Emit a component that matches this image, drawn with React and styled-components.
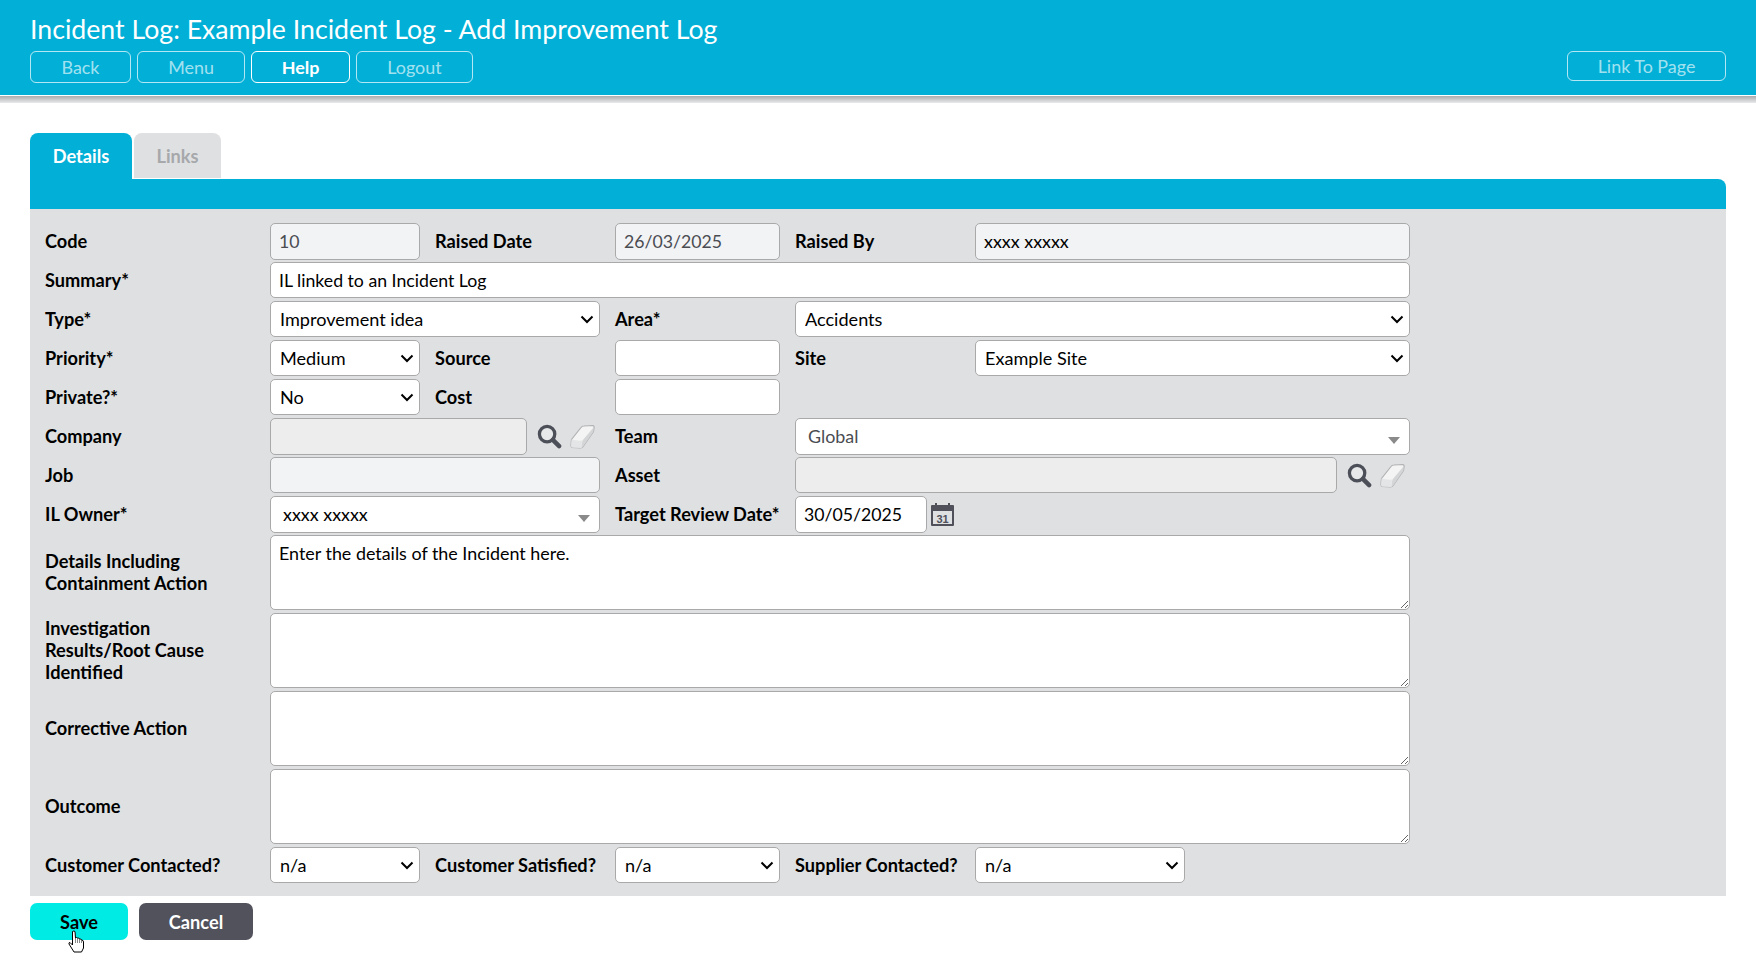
import React from 'react'
import styled, { createGlobalStyle } from 'styled-components'

const chevron = "url(\"data:image/svg+xml,%3Csvg xmlns='http://www.w3.org/2000/svg' width='14' height='9' viewBox='0 0 14 9'%3E%3Cpath d='M1.5 1.5L7 7l5.5-5.5' fill='none' stroke='%23000' stroke-width='2'/%3E%3C/svg%3E\")"

const GlobalStyle = createGlobalStyle`
  html, body { margin: 0; padding: 0; background: #fff; }
  body { font-family: Lato, "Liberation Sans", sans-serif; color: #000; }
  * { box-sizing: border-box; }
`

const Header = styled.header`
  height: 96px;
  background: #02b0d7;
  border-bottom: 1px solid #fff;
  padding: 13px 30px 0;
`
const HeaderShadow = styled.div`
  height: 7px;
  background: linear-gradient(#a9abad, #e9eaeb);
`
const Title = styled.h1`
  margin: 0;
  height: 38px;
  font-size: 26.7px;
  line-height: 33px;
  font-weight: 400;
  color: #fff;
`
const NavRow = styled.nav`
  display: flex;
  align-items: flex-start;
  gap: 6px;
`
const NavButton = styled.button`
  height: ${p => p.$short ? '30px' : '32px'};
  width: ${p => p.$width}px;
  margin-left: ${p => p.$push ? 'auto' : '0'};
  padding: 0;
  font: ${p => p.$active ? 700 : 400} 17.9px Lato, sans-serif;
  color: ${p => p.$active ? '#fff' : 'rgba(255,255,255,.65)'};
  background: transparent;
  border: 1px solid ${p => p.$active ? '#fff' : 'rgba(255,255,255,.7)'};
  border-radius: 6px;
`

const Main = styled.main`
  padding: 30px 30px 24px;
`
const Tabs = styled.div`
  display: flex;
  align-items: flex-start;
  gap: 2px;
  height: 46px;
`
const Tab = styled.div`
  height: ${p => p.$active ? '46px' : '45px'};
  width: ${p => p.$width}px;
  border-radius: 8px 8px 0 0;
  background: ${p => p.$active ? '#02b0d7' : '#dfe0e2'};
  color: ${p => p.$active ? '#fff' : '#a6a8ab'};
  font-size: 18.2px;
  font-weight: 700;
  line-height: 46px;
  text-align: center;
`
const TabBar = styled.div`
  height: 30px;
  background: #02b0d7;
  border-top-right-radius: 8px;
`
const Panel = styled.form`
  display: flex;
  flex-direction: column;
  gap: 3px;
  height: 687px;
  padding: 14px 15px 0;
  background: #dfe0e2;
`
const Row = styled.div`
  display: grid;
  grid-template-columns: 210px 150px 165px 165px 165px 435px;
  column-gap: 15px;
  align-items: center;
  height: ${p => p.$tall ? '75px' : '36px'};
`
const Label = styled.label`
  font-size: 18.2px;
  font-weight: 700;
  line-height: 22px;
  margin-bottom: 1px;
`
const Cell = styled.div`
  grid-column: span ${p => p.$span || 1};
  display: flex;
  align-items: center;
  min-width: 0;
  height: 100%;
`
const Input = styled.input`
  width: ${p => p.$width ? p.$width + 'px' : '100%'};
  height: 100%;
  flex: ${p => p.$grow ? 1 : 'none'};
  min-width: 0;
  padding: 0 8px;
  font: 400 17.7px Lato, sans-serif;
  color: ${p => p.$muted ? '#4a4c52' : '#000'};
  background: ${p => p.$muted ? '#f2f3f5' : p.$locked ? '#ededed' : '#fff'};
  border: 1px solid #a9a9a9;
  border-radius: 5px;
  outline: none;
`
const Select = styled.select`
  appearance: none;
  width: ${p => p.$width ? p.$width + 'px' : '100%'};
  height: 100%;
  padding: 0 24px 0 9px;
  font: 400 18.1px Lato, sans-serif;
  color: #000;
  background: #fff ${chevron} no-repeat right 5px center;
  border: 1px solid #a9a9a9;
  border-radius: 5px;
  outline: none;
`
const Combo = styled.div`
  position: relative;
  width: 100%;
  height: 100%;
  padding-left: ${p => p.$pad}px;
  font-size: 17.9px;
  line-height: 35px;
  color: ${p => p.$dark ? '#000' : '#4a4c52'};
  background: #fff;
  border: 1px solid #a9a9a9;
  border-radius: 5px;
  &::after {
    content: '';
    position: absolute;
    right: 9px;
    top: 18px;
    border-style: solid;
    border-width: 7px 6px 0;
    border-color: #8a8a8a transparent transparent;
  }
`
const TextArea = styled.textarea`
  width: 100%;
  height: 100%;
  padding: 6px 8px;
  font: 400 17.9px/22px Lato, sans-serif;
  color: #000;
  background: #fff;
  border: 1px solid #a9a9a9;
  border-radius: 5px;
  outline: none;
  display: block;
`
const ReadBox = styled.div`
  width: 100%;
  height: 100%;
  padding-left: 8px;
  font-size: 17.9px;
  line-height: 35px;
  background: #f2f3f5;
  border: 1px solid #a9a9a9;
  border-radius: 5px;
`
const Tools = styled.div`
  display: flex;
  align-items: center;
  gap: 8px;
  margin-left: 10px;
  padding-right: 5px;
  flex: none;
`
const CalendarWrap = styled.div`
  margin-left: 3px;
  height: 26px;
  margin-top: 1px;
`
const Actions = styled.div`
  display: flex;
  gap: 11px;
  margin-top: 7px;
  position: relative;
`
const ActionButton = styled.button`
  width: ${p => p.$width}px;
  height: 37px;
  padding: 0;
  border: 0;
  border-radius: 7px;
  font: 700 18.2px Lato, sans-serif;
  color: ${p => p.$primary ? '#000' : '#fff'};
  background: ${p => p.$primary ? '#00ebe3' : '#52525c'};
`
const PointerWrap = styled.div`
  position: absolute;
  left: 38px;
  top: 27px;
  width: 17px;
  height: 23px;
  z-index: 2;
`

const SearchIcon = () => (
  <svg width="25" height="25" viewBox="0 0 26 26">
    <circle cx="10.5" cy="10.5" r="8" fill="#f4f5f6" fillOpacity=".35" stroke="#4c4e58" strokeWidth="3.4" />
    <path d="M16.5 16.5L23 23" stroke="#4c4e58" strokeWidth="4.6" strokeLinecap="round" />
  </svg>
)

const EraserIcon = () => (
  <svg width="25" height="25" viewBox="0 0 25 25">
    <path d="M1.5 15.5L11 3.5Q12 2 14 2L23 1.5Q24.5 2 24 4L23.5 7.5L13.5 22Q12.5 24 10.5 24L2 23.5Q1 23 1 21.5Z" fill="#f4f4f4" stroke="#b0b1b2" strokeWidth="1.2" />
    <path d="M12.5 16.5L23.5 3.5L23.5 7.5L13.5 22Q12.5 24 11 24Z" fill="#d4d5d6" />
    <path d="M1.5 15.5Q7 17 12 16.5L11.5 24L2 23.5Q1 23 1 21.5Z" fill="#e4e5e6" />
  </svg>
)

const CalendarIcon = () => (
  <svg width="25" height="25" viewBox="0 0 25 25">
    <rect x="1" y="3" width="23" height="21" rx="1" fill="#4f505a" />
    <rect x="3" y="9" width="19" height="13" fill="#dfe0e2" />
    <rect x="5" y="1" width="2" height="5" fill="#4f505a" />
    <rect x="18" y="1" width="2" height="5" fill="#4f505a" />
    <text x="12.5" y="20.5" textAnchor="middle" fontFamily="Liberation Sans, sans-serif" fontSize="11" fontWeight="700" fill="#4f505a">31</text>
  </svg>
)

const PointerIcon = () => (
  <svg width="17" height="23" viewBox="0 0 17 23">
    <path d="M4.5 1.5Q6 0.5 7 1.5L7.5 8Q8.5 7 9.5 8Q11 7.5 11.5 9Q13 8.5 13.5 10Q15.5 10 15.5 12L15.5 18L13.5 22L6 22L1 14Q0.5 12.5 2 12.5L4.5 15Z" fill="#fff" stroke="#000" strokeWidth="1" />
    <path d="M7.5 8V13M9.5 8V13M11.5 9V13M13.5 10V13" stroke="#555" strokeWidth=".7" />
  </svg>
)

const App = () => (
  <>
    <GlobalStyle />
    <Header>
      <Title>Incident Log: Example Incident Log - Add Improvement Log</Title>
      <NavRow>
        <NavButton type="button" $width={101}>Back</NavButton>
        <NavButton type="button" $width={108}>Menu</NavButton>
        <NavButton type="button" $width={99} $active>Help</NavButton>
        <NavButton type="button" $width={117}>Logout</NavButton>
        <NavButton type="button" $width={159} $push $short>Link To Page</NavButton>
      </NavRow>
    </Header>
    <HeaderShadow />
    <Main>
      <Tabs>
        <Tab $active $width={102}>Details</Tab>
        <Tab $width={87}>Links</Tab>
      </Tabs>
      <TabBar />
      <Panel>
        <Row>
          <Label>Code</Label>
          <Cell><Input $muted readOnly defaultValue="10" /></Cell>
          <Label>Raised Date</Label>
          <Cell><Input $muted readOnly defaultValue="26/03/2025" /></Cell>
          <Label>Raised By</Label>
          <Cell><ReadBox>xxxx xxxxx</ReadBox></Cell>
        </Row>
        <Row>
          <Label>Summary*</Label>
          <Cell $span={5}><Input defaultValue="IL linked to an Incident Log" /></Cell>
        </Row>
        <Row>
          <Label>Type*</Label>
          <Cell $span={2}><Select defaultValue="Improvement idea"><option>Improvement idea</option></Select></Cell>
          <Label>Area*</Label>
          <Cell $span={2}><Select defaultValue="Accidents"><option>Accidents</option></Select></Cell>
        </Row>
        <Row>
          <Label>Priority*</Label>
          <Cell><Select defaultValue="Medium"><option>Medium</option></Select></Cell>
          <Label>Source</Label>
          <Cell><Input /></Cell>
          <Label>Site</Label>
          <Cell><Select defaultValue="Example Site"><option>Example Site</option></Select></Cell>
        </Row>
        <Row>
          <Label>Private?*</Label>
          <Cell><Select defaultValue="No"><option>No</option></Select></Cell>
          <Label>Cost</Label>
          <Cell><Input /></Cell>
        </Row>
        <Row>
          <Label>Company</Label>
          <Cell $span={2}>
            <Input $locked $grow readOnly />
            <Tools><SearchIcon /><EraserIcon /></Tools>
          </Cell>
          <Label>Team</Label>
          <Cell $span={2}><Combo $pad={12}>Global</Combo></Cell>
        </Row>
        <Row>
          <Label>Job</Label>
          <Cell $span={2}><Input $muted readOnly /></Cell>
          <Label>Asset</Label>
          <Cell $span={2}>
            <Input $locked $grow readOnly />
            <Tools><SearchIcon /><EraserIcon /></Tools>
          </Cell>
        </Row>
        <Row>
          <Label>IL Owner*</Label>
          <Cell $span={2}><Combo $pad={12} $dark>xxxx xxxxx</Combo></Cell>
          <Label>Target Review Date*</Label>
          <Cell $span={2}>
            <Input $width={132} defaultValue="30/05/2025" />
            <CalendarWrap><CalendarIcon /></CalendarWrap>
          </Cell>
        </Row>
        <Row $tall>
          <Label>Details Including<br />Containment Action</Label>
          <Cell $span={5}><TextArea defaultValue="Enter the details of the Incident here." /></Cell>
        </Row>
        <Row $tall>
          <Label>Investigation<br />Results/Root Cause<br />Identified</Label>
          <Cell $span={5}><TextArea /></Cell>
        </Row>
        <Row $tall>
          <Label>Corrective Action</Label>
          <Cell $span={5}><TextArea /></Cell>
        </Row>
        <Row $tall>
          <Label>Outcome</Label>
          <Cell $span={5}><TextArea /></Cell>
        </Row>
        <Row>
          <Label>Customer Contacted?</Label>
          <Cell><Select defaultValue="n/a"><option>n/a</option></Select></Cell>
          <Label>Customer Satisfied?</Label>
          <Cell><Select defaultValue="n/a"><option>n/a</option></Select></Cell>
          <Label>Supplier Contacted?</Label>
          <Cell><Select $width={210} defaultValue="n/a"><option>n/a</option></Select></Cell>
        </Row>
      </Panel>
      <Actions>
        <ActionButton type="button" $primary $width={98}>Save</ActionButton>
        <ActionButton type="button" $width={114}>Cancel</ActionButton>
        <PointerWrap><PointerIcon /></PointerWrap>
      </Actions>
    </Main>
  </>
)

export default App
